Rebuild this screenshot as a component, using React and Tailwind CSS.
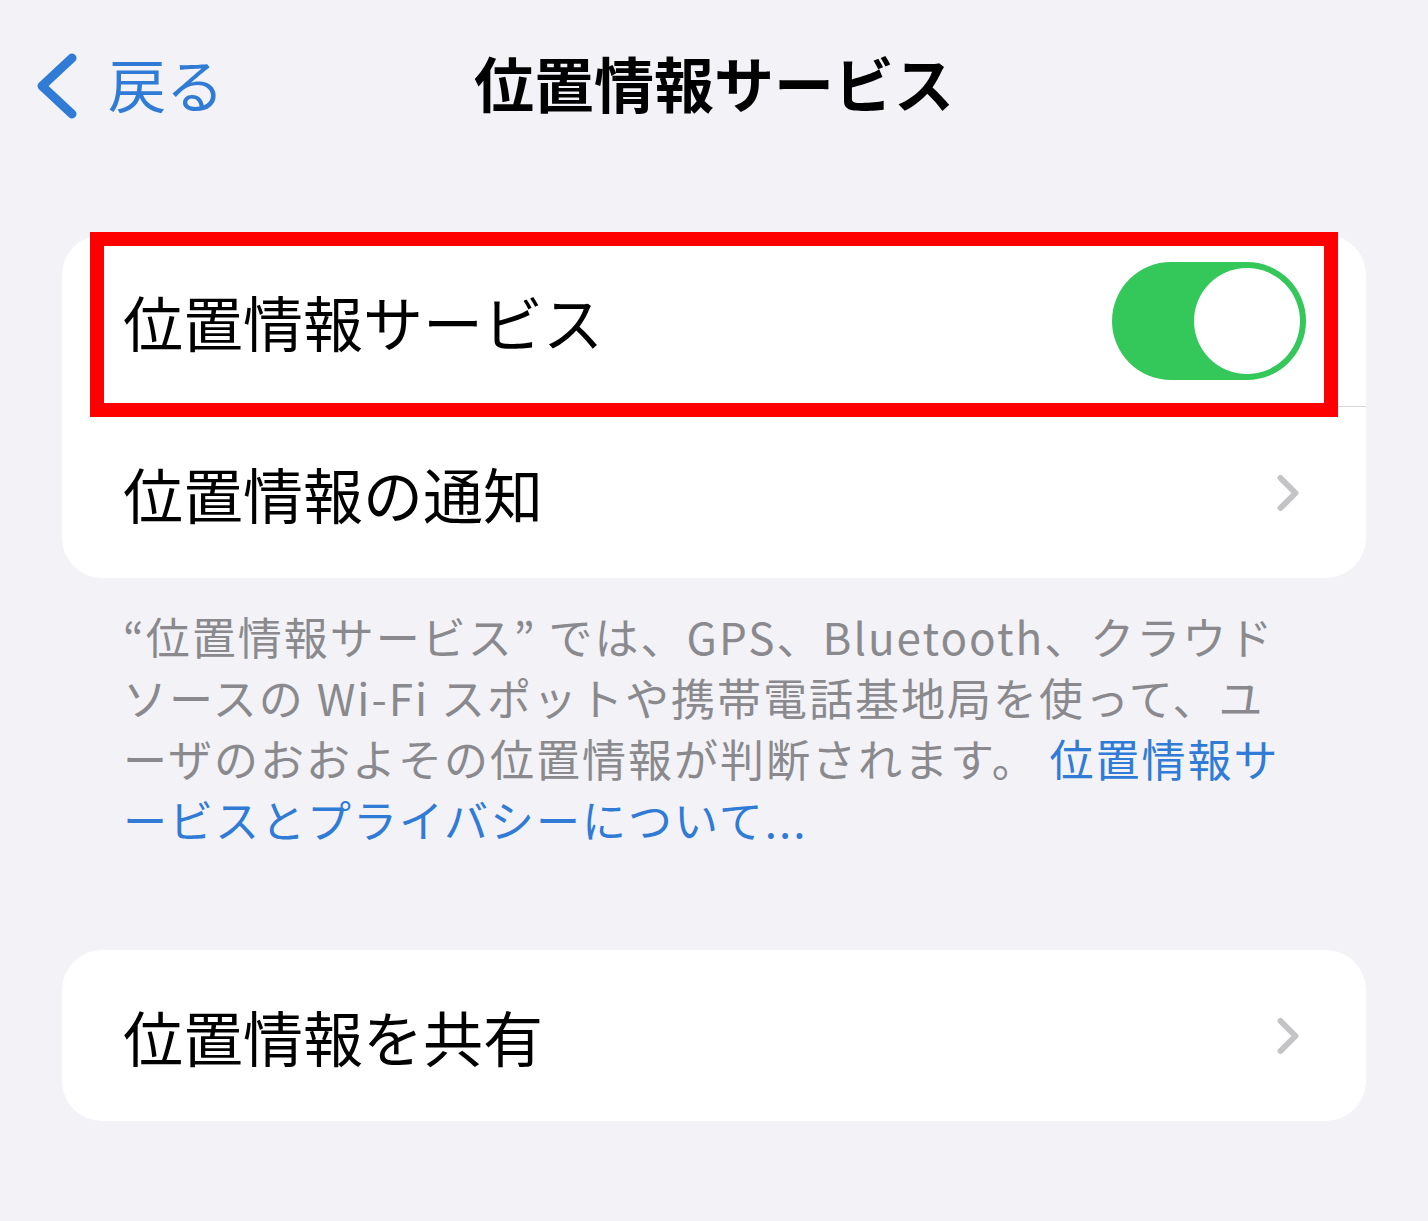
import { ChevronRight } from "lucide-react";

const font = { fontFamily: '"Noto Sans CJK JP", "Noto Sans", sans-serif' };

function Toggle() {
  return (
    <div className="w-[194px] h-[118px] rounded-full bg-[#34c759] flex items-center justify-end pr-[6px] shrink-0">
      <div className="w-[106px] h-[106px] rounded-full bg-white" />
    </div>
  );
}

function Row({ label, children, highlighted }) {
  return (
    <div className="h-[171px] flex items-center pl-[61px] pr-[60px] relative">
      <span className="flex-1 text-[60px] text-black leading-none">{label}</span>
      {children}
      {highlighted && (
        <div className="absolute left-[28px] right-[28px] top-[-3px] bottom-[-11px] border-[14px] border-[#ff0000] pointer-events-none" />
      )}
    </div>
  );
}

export default function App() {
  return (
    <div className="w-[1428px] h-[1221px] bg-[#f2f2f7] overflow-hidden" style={font}>
      <div className="h-[170px] relative flex items-center justify-center pb-[4px]">
        <div className="absolute left-[30px] top-[50px] flex items-center text-[#2f7bd6]">
          <svg width="54" height="72" viewBox="0 0 54 72" fill="none">
            <polyline
              points="42,8 12,36 42,64"
              stroke="currentColor"
              strokeWidth="9"
              strokeLinecap="round"
              strokeLinejoin="round"
            />
          </svg>
          <span className="text-[58px] leading-none ml-[24px] -mt-[6px]">戻る</span>
        </div>
        <h1 className="text-[60px] font-bold leading-none text-black -mt-[2px]">位置情報サービス</h1>
      </div>

      <div className="mx-[62px] mt-[65px] bg-white rounded-[40px]">
        <Row label="位置情報サービス" highlighted>
          <Toggle />
        </Row>
        <div className="ml-[61px] h-px bg-[#d6d6da]" />
        <Row label="位置情報の通知">
          <ChevronRight size={60} strokeWidth={2.4} className="text-[#c4c4c7] -mr-[12px]" />
        </Row>
      </div>

      <div className="ml-[123px] mt-[28px] text-[44px] leading-[61px] text-[#8a8a8e] tracking-[2px]">
        <div className="whitespace-nowrap">“位置情報サービス” では、GPS、Bluetooth、クラウド</div>
        <div className="whitespace-nowrap">ソースの Wi-Fi スポットや携帯電話基地局を使って、ユ</div>
        <div className="whitespace-nowrap">
          ーザのおおよその位置情報が判断されます。 <span className="text-[#2f7bd6]">位置情報サ</span>
        </div>
        <div className="whitespace-nowrap text-[#2f7bd6]">ービスとプライバシーについて...</div>
      </div>

      <div className="mx-[62px] mt-[100px] bg-white rounded-[40px]">
        <Row label="位置情報を共有">
          <ChevronRight size={60} strokeWidth={2.4} className="text-[#c4c4c7] -mr-[12px]" />
        </Row>
      </div>
    </div>
  );
}
